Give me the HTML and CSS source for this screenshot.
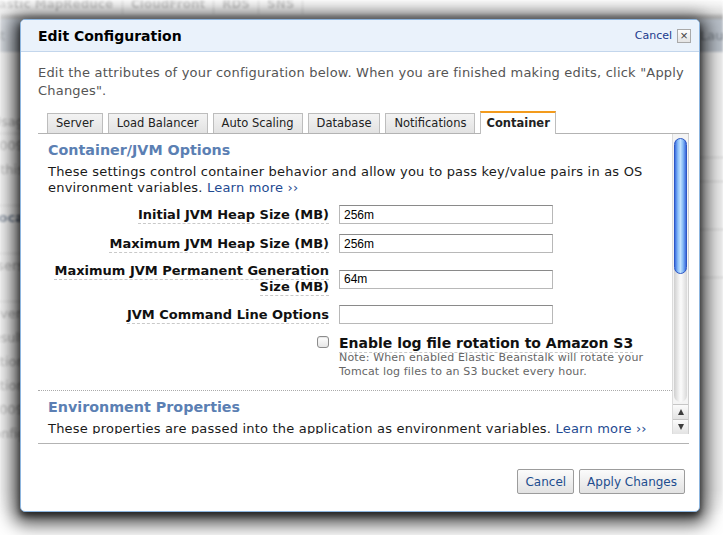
FILE: index.html
```html
<!DOCTYPE html>
<html>
<head>
<meta charset="utf-8">
<title>Edit Configuration</title>
<link rel="stylesheet" href="styles.css">
</head>
<body>
<div class="backdrop">
  <div class="bd-tabs">
    <span class="bd-tab first">Elastic MapReduce</span><span class="bd-tab">CloudFront</span><span class="bd-tab">RDS</span><span class="bd-tab">SNS</span><span class="bd-tab last"></span>
  </div>
  <div class="bd-band"></div>
  <div class="bd-sub"><span class="bd-sub-left">Beanst</span><span class="bd-sub-right">Launch</span></div>
  <div class="bd-content">
    <div class="bd-col left">
      <div class="bd-row gap"></div>
      <div class="bd-row line">Usag</div>
      <div class="bd-row">2009</div>
      <div class="bd-row">this</div>
      <div class="bd-row line"></div>
      <div class="bd-row strong">Loca</div>
      <div class="bd-row line"></div>
      <div class="bd-row">Users</div>
      <div class="bd-row line"></div>
      <div class="bd-row">Even</div>
      <div class="bd-row">Result</div>
      <div class="bd-row">Action</div>
      <div class="bd-row">Action</div>
      <div class="bd-row">2009</div>
      <div class="bd-row">Config</div>
    </div>
    <div class="bd-col right">
      <div class="bd-row gap"></div>
      <div class="bd-row"></div>
      <div class="bd-row line"></div>
      <div class="bd-row line"></div>
      <div class="bd-row"></div>
      <div class="bd-row line"></div>
      <div class="bd-row"></div>
      <div class="bd-row line"></div>
    </div>
  </div>
</div>

<div class="dialog">
  <div class="dlg-head">
    <h1 class="dlg-title">Edit Configuration</h1>
    <div class="dlg-close"><a class="close-link">Cancel</a><span class="close-x">×</span></div>
  </div>
  <div class="dlg-body">
    <p class="intro">Edit the attributes of your configuration below. When you are finished making edits, click "Apply Changes".</p>
    <ul class="tabs">
      <li class="tab">Server</li>
      <li class="tab">Load Balancer</li>
      <li class="tab">Auto Scaling</li>
      <li class="tab">Database</li>
      <li class="tab">Notifications</li>
      <li class="tab active">Container</li>
    </ul>
    <div class="panel">
      <div class="scroll">
        <section class="sec">
          <h2 class="sec-title">Container/JVM Options</h2>
          <p class="sec-desc">These settings control container behavior and allow you to pass key/value pairs in as OS environment variables. <a class="more">Learn more ››</a></p>
          <div class="form">
            <label class="lbl"><span class="lbl-text">Initial JVM Heap Size (MB)</span></label>
            <input class="field" type="text" value="256m">
            <label class="lbl"><span class="lbl-text">Maximum JVM Heap Size (MB)</span></label>
            <input class="field" type="text" value="256m">
            <label class="lbl"><span class="lbl-text">Maximum JVM Permanent Generation Size (MB)</span></label>
            <input class="field" type="text" value="64m">
            <label class="lbl"><span class="lbl-text">JVM Command Line Options</span></label>
            <input class="field" type="text" value="">
          </div>
          <div class="check-row">
            <span class="cb-cell"><span class="cb"></span></span>
            <div class="check-text">
              <div class="check-label"><span class="lbl-text">Enable log file rotation to Amazon S3</span></div>
              <div class="note">Note: When enabled Elastic Beanstalk will rotate your<br>Tomcat log files to an S3 bucket every hour.</div>
            </div>
          </div>
        </section>
        <div class="sep"></div>
        <section class="sec">
          <h2 class="sec-title">Environment Properties</h2>
          <p class="sec-desc">These properties are passed into the application as environment variables. <a class="more">Learn more ››</a></p>
        </section>
      </div>
      <div class="scrollbar">
        <div class="sb-track"><div class="sb-thumb"></div></div>
        <div class="sb-arrow up"></div>
        <div class="sb-arrow down"></div>
      </div>
    </div>
    <div class="actions">
      <button class="btn">Cancel</button>
      <button class="btn">Apply Changes</button>
    </div>
  </div>
</div>
</body>
</html>
```

FILE: styles.css
```css
* { box-sizing: border-box; }
html, body { margin: 0; padding: 0; }
body {
  width: 723px;
  height: 535px;
  overflow: hidden;
  position: relative;
  background: #ffffff;
  font-family: "DejaVu Sans", Verdana, sans-serif;
  color: #222;
}

/* ---------- page behind the modal ---------- */
.backdrop {
  position: absolute;
  left: 0;
  top: 0;
  width: 723px;
  height: 516px;
  background: #eeeeee;
  filter: blur(0.8px);
  -webkit-mask-image: linear-gradient(to right, rgba(0,0,0,0.55) 0, #000 16px), linear-gradient(to bottom, rgba(0,0,0,0.5) 0, #000 10px, #000 490px, rgba(0,0,0,0) 516px);
  -webkit-mask-composite: source-in;
  mask-image: linear-gradient(to right, rgba(0,0,0,0.55) 0, #000 16px), linear-gradient(to bottom, rgba(0,0,0,0.5) 0, #000 10px, #000 490px, rgba(0,0,0,0) 516px);
  mask-composite: intersect;
}
.bd-tabs {
  display: flex;
  height: 14px;
  margin-left: -22px;
  background: linear-gradient(#f6f6f6, #dedede);
  overflow: hidden;
  white-space: nowrap;
}
.bd-tab {
  flex: none;
  font-weight: bold;
  font-size: 12px;
  line-height: 8px;
  color: #b0b0b0;
  padding: 0 8px;
  border-right: 1px solid #c4c4c4;
}
.bd-tab.first { width: 145px; }
.bd-tab.last { border-right: 0; }
.bd-band { height: 5px; background: linear-gradient(#c9c9c9, #a4a4a4); }
.bd-sub {
  height: 33px;
  background: #b9c0c9;
  display: flex;
  justify-content: space-between;
  align-items: center;
  font-size: 13px;
  color: #7d848c;
}
.bd-sub-left { margin-left: -40px; }
.bd-sub-right { margin-right: -24px; }
.bd-content { display: flex; justify-content: space-between; }
.bd-col { width: 40px; font-size: 13px; color: #9a9a9a; }
.bd-col.left { margin-left: -16px; text-align: right; }
.bd-col.right { margin-right: -10px; }
.bd-row { height: 24px; line-height: 24px; white-space: nowrap; }
.bd-row.gap { height: 58px; }
.bd-row.line { border-bottom: 1px solid #cfcfcf; }
.bd-row.strong { color: #5d6c80; font-weight: bold; }

/* ---------- dialog ---------- */
.dialog {
  position: absolute;
  left: 20px;
  top: 19px;
  width: 680px;
  height: 493px;
  display: flex;
  flex-direction: column;
  background: #fff;
  border: 1px solid #8db5de;
  border-radius: 5px;
  box-shadow: 0 4px 6px rgba(0,0,0,0.6), 0 5px 18px 7px rgba(0,0,0,0.7);
  overflow: hidden;
}
.dlg-head {
  height: 32px;
  flex: none;
  display: flex;
  align-items: center;
  justify-content: space-between;
  padding: 0 8px 0 17px;
  background: #eaf2fb;
  border-bottom: 1px solid #c3d6ec;
}
.dlg-title {
  margin: 0;
  font-size: 14px;
  font-weight: bold;
  color: #000;
}
.dlg-close { display: flex; align-items: center; gap: 5px; }
.close-link { font-size: 11px; color: #1a3a8c; }
.close-x {
  width: 14px;
  height: 14px;
  border: 1px solid #a9a9a9;
  background: linear-gradient(#fdfdfd, #e4e4e4);
  font-size: 13px;
  line-height: 11px;
  text-align: center;
  color: #444;
  font-family: "Liberation Sans", Arial, sans-serif;
}

.dlg-body {
  flex: 1;
  display: flex;
  flex-direction: column;
  padding: 12px 10px 0 17px;
}
.intro {
  margin: 0;
  font-size: 13px;
  letter-spacing: 0.2px;
  line-height: 18px;
  color: #555;
}

/* tabs */
.tabs {
  list-style: none;
  margin: 11px 0 0;
  padding: 0 0 0 9px;
  height: 22px;
  display: flex;
  align-items: flex-end;
  gap: 5px;
  position: relative;
  z-index: 1;
}
.tab {
  height: 20px;
  padding: 0 8px;
  font-size: 11.5px;
  line-height: 19px;
  color: #222;
  background: linear-gradient(#f3f3f3, #e2e2e2);
  border: 1px solid #bdbdbd;
  border-bottom: 0;
}
.tab.active {
  height: 23px;
  margin-bottom: -1px;
  background: #fff;
  border-top: 2px solid #f39b1d;
  font-weight: bold;
  line-height: 20px;
  padding: 0 5px;
}

/* panel */
.panel {
  flex: none;
  height: 311px;
  display: flex;
  border-top: 1px solid #b3b3b3;
  border-bottom: 1px solid #b3b3b3;
  padding-bottom: 9px;
}
.scroll {
  flex: 1;
  overflow: hidden;
}
.sec { padding: 6px 10px 0; }
.sec-title {
  margin: 0;
  font-size: 14.3px;
  line-height: 20px;
  font-weight: bold;
  color: #5b7fb3;
}
.sec-desc {
  margin: 4px 0 0;
  font-size: 13px;
  letter-spacing: 0.2px;
  line-height: 16px;
  color: #1a1a1a;
}
.more { color: #1f4b92; }

.form {
  display: grid;
  grid-template-columns: 281px 214px;
  column-gap: 10px;
  row-gap: 10px;
  align-items: center;
  margin-top: 9px;
}
.lbl {
  text-align: right;
  font-size: 13px;
  line-height: 16px;
  font-weight: bold;
  color: #111;
}
.lbl-text {
  border-bottom: 1px dashed #c9c9c9;
  padding-bottom: 1px;
}
.field {
  width: 214px;
  height: 19px;
  margin: 0;
  padding: 0 4px;
  border: 1px solid #b8b8b8;
  border-top-color: #8a8a8a;
  font-family: "Liberation Sans", Arial, sans-serif;
  font-size: 12px;
  color: #000;
  background: #fff;
}

.check-row {
  display: flex;
  margin-top: 11px;
  gap: 10px;
}
.cb-cell {
  width: 281px;
  display: flex;
  justify-content: flex-end;
  padding-top: 1px;
}
.cb {
  width: 12px;
  height: 12px;
  border: 1px solid #8c8c8c;
  border-radius: 3px;
  background: linear-gradient(#ffffff, #e6e6e6);
  box-shadow: inset 0 1px 1px rgba(0,0,0,0.1);
}
.check-label {
  font-size: 14px;
  line-height: 16px;
  font-weight: bold;
  color: #111;
}
.note {
  font-size: 11px;
  letter-spacing: 0.15px;
  line-height: 14px;
  color: #666;
}
.sep {
  margin-top: 11px;
  border-top: 1px dotted #aaa;
}

/* fake aqua scrollbar */
.scrollbar {
  flex: none;
  width: 17px;
  display: flex;
  flex-direction: column;
  align-items: center;
  background: #f4f4f4;
  border-left: 1px solid #dcdcdc;
  border-right: 1px solid #d0d0d0;
  padding-top: 4px;
}
.sb-track {
  flex: 1;
  width: 13px;
  border-radius: 7px;
  background: linear-gradient(to right, #cfcfcf, #f7f7f7 45%, #fafafa 55%, #d9d9d9);
  margin-bottom: 2px;
}
.sb-thumb {
  height: 136px;
  width: 13px;
  border-radius: 7px;
  border: 1px solid #2d57c4;
  background: linear-gradient(to right, #3c6fe0, #8ec2fa 28%, #bfe0ff 50%, #86bbf6 72%, #3a69dc);
}
.sb-arrow {
  flex: none;
  width: 15px;
  height: 15px;
  border-top: 1px solid #c6c6c6;
  background: linear-gradient(#fbfbfb, #e3e3e3);
  display: flex;
  align-items: center;
  justify-content: center;
}
.sb-arrow::after {
  content: "";
  border-left: 3.5px solid transparent;
  border-right: 3.5px solid transparent;
}
.sb-arrow.up::after { border-bottom: 6px solid #3d3d3d; }
.sb-arrow.down::after { border-top: 6px solid #3d3d3d; }

/* buttons */
.actions {
  display: flex;
  justify-content: flex-end;
  gap: 5px;
  margin-top: 25px;
  padding-right: 4px;
}
.btn {
  height: 25px;
  padding: 0 7px;
  font-family: "DejaVu Sans", Verdana, sans-serif;
  font-size: 12px;
  color: #1d4d8e;
  background: linear-gradient(#fbfbfb, #e2e2e2);
  border: 1px solid #9c9c9c;
  border-radius: 2px;
}
```
